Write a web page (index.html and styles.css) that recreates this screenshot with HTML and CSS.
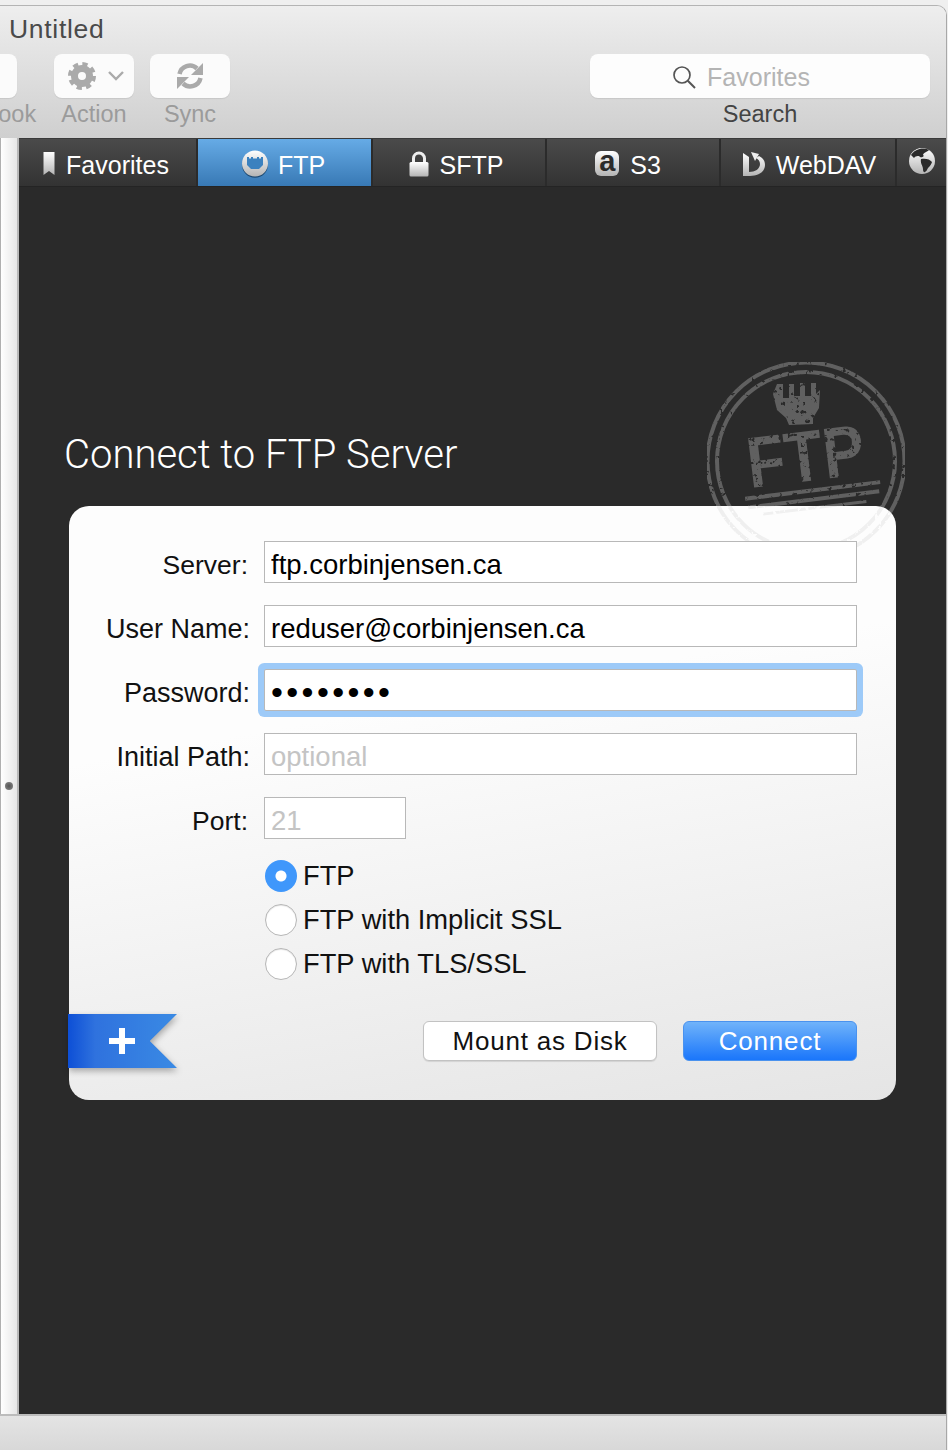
FILE: index.html
```html
<!DOCTYPE html>
<html lang="en">
<head>
  <meta charset="UTF-8" />
  <meta name="viewport" content="width=device-width, initial-scale=1" />
  <title>Untitled</title>
  <link rel="stylesheet" href="styles.css">
</head>
<body>

<div class="window">

  <!-- Toolbar -->
  <header class="toolbar">
    <div class="title">Untitled</div>
    <div class="tools">
      <div class="tool tool-book">
        <div class="tool-btn"></div>
        <span class="tool-label">Address Book</span>
      </div>
      <div class="tool">
        <div class="tool-btn">
          <svg width="30" height="30" viewBox="0 0 30 30" class="gear">
            <circle cx="15" cy="15" r="11.5" fill="none" stroke="#aaa" stroke-width="5" stroke-dasharray="5 4.03"/>
            <circle cx="15" cy="15" r="7.5" fill="none" stroke="#aaa" stroke-width="7"/>
          </svg>
          <svg width="18" height="12" viewBox="0 0 18 12" class="chevron">
            <path d="M2 2 L9 9 L16 2" fill="none" stroke="#aaa" stroke-width="2.4"/>
          </svg>
        </div>
        <span class="tool-label">Action</span>
      </div>
      <div class="tool">
        <div class="tool-btn">
          <svg width="28" height="28" viewBox="0 0 28 28">
            <path d="M3.5 12 A10.5 10.5 0 0 1 21 6.5" fill="none" stroke="#aaa" stroke-width="4.5"/>
            <path d="M27 1 V13 H15 Z" fill="#aaa"/>
            <path d="M24.5 16 A10.5 10.5 0 0 1 7 21.5" fill="none" stroke="#aaa" stroke-width="4.5"/>
            <path d="M1 27 V15 H13 Z" fill="#aaa"/>
          </svg>
        </div>
        <span class="tool-label">Sync</span>
      </div>
      <div class="tool tool-search">
        <div class="search-box">
          <svg width="24" height="24" viewBox="0 0 24 24">
            <circle cx="10" cy="10" r="8" fill="none" stroke="#555" stroke-width="1.7"/>
            <path d="M15.8 15.8 L23 23" stroke="#555" stroke-width="2"/>
          </svg>
          <span>Favorites</span>
        </div>
        <span class="tool-label dark">Search</span>
      </div>
    </div>
  </header>

  <div class="main">
    <!-- thin collapsed sidebar -->
    <aside class="strip"><span class="grip"></span></aside>

    <div class="content">
      <nav class="tabs">
        <a class="tab tab-fav" href="#">
          <svg width="14" height="25" viewBox="0 0 14 25">
            <defs>
              <linearGradient id="iconWhite" x1="0" y1="0" x2="0" y2="1">
                <stop offset="0" stop-color="#fff"/>
                <stop offset="1" stop-color="#b4b4b4"/>
              </linearGradient>
            </defs>
            <path d="M1.5 1 H12.5 V24 L7 20 L1.5 24 Z" fill="url(#iconWhite)"/>
          </svg>
          Favorites
        </a>
        <a class="tab active" href="#">
          <svg width="28" height="28" viewBox="0 0 28 28">
            <circle cx="14" cy="14.8" r="13" fill="#1d4a73"/>
            <circle cx="14" cy="13.5" r="13" fill="url(#iconWhite)"/>
            <path d="M6 7 H8 V8.5 H10 V7 H12 V8.5 H16 V7 H18 V8.5 H20 V7 H22 V15 L18 19 H10 L6 15 Z" fill="#3b81bf"/>
          </svg>
          FTP
        </a>
        <a class="tab tab-sftp" href="#">
          <svg width="20" height="26" viewBox="0 0 20 26">
            <path d="M4.5 12 V7.5 A5.5 5.5 0 0 1 15.5 7.5 V12" fill="none" stroke="#eee" stroke-width="3"/>
            <rect x="0.5" y="11" width="19" height="14.5" rx="1.5" fill="url(#iconWhite)"/>
          </svg>
          SFTP
        </a>
        <a class="tab tab-s3" href="#">
          <span class="s3-icon">a</span>
          S3
        </a>
        <a class="tab tab-dav" href="#">
          <svg width="24" height="26" viewBox="0 0 24 26">
            <path d="M1 2 L7 6 V21 C13 21 18 18 18 13 C18 10 16 8 14 7 L17 5 C21 7 23 10 23 14 C23 21 16 25 8 25 H1 Z" fill="url(#iconWhite)"/>
            <path d="M9 1 L17 3 L13 10 Z" fill="#eee"/>
          </svg>
          WebDAV
        </a>
        <a class="tab tab-globe" href="#">
          <svg width="28" height="28" viewBox="0 0 28 28">
            <circle cx="14" cy="14" r="13" fill="url(#iconWhite)"/>
            <path d="M3 8 C7 2 15 0 21 3 C19 5 16 5 15 8 C17 9 14 11 12 10 C11 8 7 9 6 11 Z" fill="#2b2b2b"/>
            <path d="M13 12 C17 11 22 12 24 15 C23 19 20 20 19 23 C17 26 15 26 15 22 C15 19 12 16 13 12 Z" fill="#2b2b2b"/>
          </svg>
        </a>
      </nav>

      <svg class="stamp stamp-back" width="210" height="210" viewBox="0 0 210 210">
        <defs>
          <filter id="distress" x="0" y="0" width="100%" height="100%">
            <feTurbulence type="fractalNoise" baseFrequency="0.22" numOctaves="3" seed="7"/>
            <feColorMatrix values="0 0 0 0 0  0 0 0 0 0  0 0 0 0 0  0 0 0 10 -2.8"/>
            <feComposite in="SourceGraphic" operator="in"/>
          </filter>
          <g id="stampArt" filter="url(#distress)">
            <circle cx="105" cy="105" r="98.5" fill="none" stroke="currentColor" stroke-width="4"/>
            <circle cx="105" cy="105" r="89" fill="none" stroke="currentColor" stroke-width="4"/>
            <g transform="rotate(-7 105 105)">
              <text x="105" y="125" text-anchor="middle" fill="currentColor" font-family="Liberation Sans, sans-serif" font-weight="700" font-size="72" textLength="118" lengthAdjust="spacingAndGlyphs">FTP</text>
              <rect x="40" y="133" width="136" height="4" fill="currentColor"/>
              <rect x="42" y="142" width="132" height="4" fill="currentColor"/>
              <rect x="56" y="151" width="104" height="3" fill="currentColor"/>
            </g>
            <path d="M76 28 H82 V42 H88 V28 H93 V40 H99 V27 H104 V40 H110 V27 H115 V38 L119 34 L118 52 L112 62 L112 68 L88 69 L85 62 L76 54 L72 38 Z" fill="currentColor"/>
          </g>
        </defs>
        <use href="#stampArt"/>
      </svg>

      <h1 class="heading">Connect to FTP Server</h1>

      <form class="card">
        <div class="card-stamp">
          <svg class="stamp-front" width="210" height="210" viewBox="0 0 210 210"><use href="#stampArt"/></svg>
        </div>

        <div class="fields">
          <label class="short">Server:</label>
          <input type="text" value="ftp.corbinjensen.ca" />

          <label>User Name:</label>
          <input type="text" value="reduser@corbinjensen.ca" />

          <label>Password:</label>
          <input type="password" class="focused" value="password" />

          <label>Initial Path:</label>
          <input type="text" placeholder="optional" />

          <label class="short">Port:</label>
          <input type="text" class="port" placeholder="21" />
        </div>

        <div class="radios">
          <label class="radio"><input type="radio" name="mode" checked /> FTP</label>
          <label class="radio"><input type="radio" name="mode" /> FTP with Implicit SSL</label>
          <label class="radio"><input type="radio" name="mode" /> FTP with TLS/SSL</label>
        </div>

        <div class="actions">
          <button type="button" class="btn btn-mount">Mount as Disk</button>
          <button type="submit" class="btn btn-connect">Connect</button>
        </div>

        <div class="ribbon">
          <div class="ribbon-shape"><span class="plus"></span></div>
        </div>
      </form>
    </div>
  </div>

  <footer class="statusbar"></footer>
</div>

</body>
</html>
```

FILE: styles.css
```css
html, body {
  margin: 0;
  height: 100%;
}

body {
  font-family: "Liberation Sans", Arial, sans-serif;
  background: #efefef;
  overflow: hidden;
}

.window {
  box-sizing: border-box;
  width: 947px;
  height: 1445px;
  margin-top: 5px;
  display: flex;
  flex-direction: column;
  border-top: 1px solid #b4b4b4;
  border-right: 1px solid #a8a8a8;
  border-top-right-radius: 10px;
  overflow: hidden;
}

/* Toolbar */
.toolbar {
  height: 132px;
  flex: none;
  background: linear-gradient(#eeeeee, #cfcfcf);
  overflow: hidden;
}

.title {
  padding: 7px 0 0 9px;
  height: 41px;
  box-sizing: border-box;
  font-size: 26.5px;
  line-height: 32px;
  letter-spacing: 0.7px;
  color: #4a4a4a;
}

.tools {
  display: flex;
  gap: 16px;
  margin-left: -63px;
  padding-top: 7px;
}

.tool {
  display: flex;
  flex-direction: column;
  align-items: center;
  width: 80px;
  flex: none;
}

.tool-book {
  margin-right: 21px;
}

.tool-book .tool-label {
  margin-right: 28px;
}

.tool-btn {
  width: 80px;
  height: 44px;
  background: #fbfbfb;
  border-radius: 8px;
  box-shadow: 0 1px 1px rgba(0,0,0,0.08);
  display: flex;
  align-items: center;
  justify-content: center;
}

.gear {
  margin-left: 1px;
  margin-right: 10px;
}

.chevron {
  margin-right: -3px;
}

.tool-label {
  font-size: 23.5px;
  line-height: 30px;
  margin-top: 1px;
  color: #9b9b9b;
  white-space: nowrap;
}

.tool-label.dark {
  color: #444;
}

.tool-search {
  width: 340px;
  margin-left: auto;
  margin-right: 16px;
}

.search-box {
  box-sizing: border-box;
  width: 100%;
  height: 44px;
  padding: 2px 38px 0 0;
  background: #fdfdfd;
  border-radius: 8px;
  box-shadow: 0 1px 1px rgba(0,0,0,0.08);
  display: flex;
  align-items: center;
  justify-content: center;
  gap: 11px;
  font-size: 25px;
  color: #b4b4b4;
}

/* Main area */
.main {
  flex: 1;
  display: flex;
  min-height: 0;
}

.strip {
  box-sizing: border-box;
  width: 19px;
  flex: none;
  background: linear-gradient(90deg, #fff, #e6e6e6);
  border-left: 1px solid #b0b0b0;
  border-right: 2px solid #b8b8b8;
  display: flex;
  align-items: center;
  justify-content: center;
}

.grip {
  width: 8px;
  height: 8px;
  margin-top: 20px;
  border-radius: 50%;
  background: radial-gradient(#555, #8a8a8a);
}

.content {
  flex: 1;
  position: relative;
  background: #2a2a2a;
  min-width: 0;
}

/* Tabs */
.tabs {
  display: flex;
  height: 49px;
  box-sizing: border-box;
  background: linear-gradient(#4a4a4a, #333333);
  border-top: 1px solid #3a3a3a;
  border-bottom: 1px solid #242424;
}

.tab {
  box-sizing: border-box;
  width: 174px;
  display: flex;
  align-items: center;
  justify-content: center;
  gap: 10px;
  flex: none;
  padding-top: 6px;
  font-size: 25px;
  color: #fff;
  text-decoration: none;
  border-right: 2px solid #2b2b2b;
}

.tab svg,
.s3-icon {
  margin-top: -4px;
}

.tab-fav {
  width: 179px;
  padding-right: 4px;
}

.tab-sftp {
  padding-right: 6px;
  gap: 11px;
}

.tab-s3 {
  padding-right: 10px;
  gap: 11px;
}

.tab-dav {
  width: 176px;
  padding-left: 2px;
}

.tab-globe {
  width: 50px;
  border-right: none;
  padding-top: 0;
}

.tab.active {
  background: linear-gradient(#66abe6, #3879b5);
  border-left: 1px solid #2b2b2b;
  margin-left: -1px;
  width: 176px;
  gap: 9px;
  padding-right: 3px;
}

.s3-icon {
  width: 24px;
  height: 25px;
  border-radius: 6px;
  background: linear-gradient(#fff, #b4b4b4);
  color: #2b2b2b;
  font-size: 29px;
  line-height: 20px;
  font-weight: 700;
  text-align: center;
}

/* Stamp */
.stamp {
  position: absolute;
  left: 682px;
  top: 218px;
  color: #606060;
}

.card-stamp {
  position: absolute;
  inset: 0;
  overflow: hidden;
  border-radius: 20px;
}

.stamp-front {
  position: absolute;
  left: 632px;
  top: -150px;
  color: #000;
  opacity: 0.05;
}

/* Heading */
.heading {
  margin: 0;
  padding: 245px 0 0 45px;
  height: 69px;
  font-family: Roboto, "Liberation Sans", sans-serif;
  font-weight: 300;
  font-size: 40px;
  line-height: 46px;
  color: #fff;
  position: relative;
}

/* Card */
.card {
  position: relative;
  box-sizing: border-box;
  width: 827px;
  height: 594px;
  margin: 5px 0 0 50px;
  padding: 35px 39px 0 0;
  border-radius: 20px;
  background: linear-gradient(170deg, #fdfdfd 35%, #e5e5e5 100%);
}

.fields {
  position: relative;
  display: grid;
  grid-template-columns: 195px 1fr;
  row-gap: 22px;
  align-items: center;
}

.fields label {
  text-align: right;
  padding: 6px 14px 0 0;
  font-size: 27px;
  color: #111;
  white-space: nowrap;
}

.fields label.short {
  padding-right: 16px;
  font-size: 26.5px;
}

.fields input {
  box-sizing: border-box;
  height: 42px;
  width: 100%;
  padding: 6px 6px 0;
  border: 1px solid #b8b8b8;
  border-radius: 0;
  outline: none;
  background: #fff;
  font-family: inherit;
  font-size: 27.5px;
  color: #000;
}

.fields input::placeholder {
  color: #c4c4c4;
  opacity: 1;
}

.fields input.port {
  width: 142px;
}

.fields input.focused {
  box-shadow: 0 0 0 6px #9dcaf8;
  border-radius: 2px;
  font-size: 34px;
  letter-spacing: 3.4px;
  padding-top: 4px;
}

.radios {
  position: relative;
  display: flex;
  flex-direction: column;
  gap: 11.75px;
  margin: 21px 0 0 196px;
}

.radio {
  display: flex;
  align-items: center;
  gap: 6px;
  height: 32px;
  font-size: 27.3px;
  color: #111;
}

.radio input {
  appearance: none;
  box-sizing: border-box;
  width: 32px;
  height: 32px;
  margin: 0;
  border-radius: 50%;
  background: #fff;
  border: 1px solid #b6b6b6;
  box-shadow: inset 0 1px 1px rgba(0,0,0,0.1);
}

.radio input:checked {
  border: none;
  box-shadow: none;
  background: radial-gradient(circle, #fff 0 5px, #3f97fb 6px);
}

.actions {
  position: absolute;
  right: 39px;
  top: 515px;
  display: flex;
  gap: 26px;
}

.btn {
  box-sizing: border-box;
  height: 40px;
  border-radius: 6px;
  font-family: inherit;
  font-size: 26px;
  letter-spacing: 0.8px;
  padding: 0;
}

.btn-mount {
  width: 234px;
  background: #fff;
  color: #111;
  border: 1px solid #c2c2c2;
  box-shadow: 0 1px 1px rgba(0,0,0,0.1);
}

.btn-connect {
  width: 174px;
  background: linear-gradient(#70b3fa, #1a76fb);
  color: #fff;
  border: 1px solid #4a92ee;
}

/* Add-bookmark ribbon */
.ribbon {
  position: absolute;
  left: -1px;
  top: 508px;
  filter: drop-shadow(1px 3px 3px rgba(0,0,0,0.3));
}

.ribbon-shape {
  width: 109px;
  height: 54px;
  background: linear-gradient(90deg, #0d4fd6, #2f72de 25%, #3a8ae4 100%);
  clip-path: polygon(0 0, 100% 0, 75% 50%, 100% 100%, 0 100%);
  display: flex;
  align-items: center;
  justify-content: center;
}

.plus {
  position: relative;
  width: 26px;
  height: 6px;
  left: -1px;
  background: #fff;
}

.plus::after {
  content: "";
  position: absolute;
  left: 10px;
  top: -10px;
  width: 6px;
  height: 26px;
  background: #fff;
}

/* Status bar */
.statusbar {
  height: 36px;
  flex: none;
  box-sizing: border-box;
  border-top: 2px solid #bcbcbc;
  background: linear-gradient(#e4e4e4, #d8d8d8);
}
```
